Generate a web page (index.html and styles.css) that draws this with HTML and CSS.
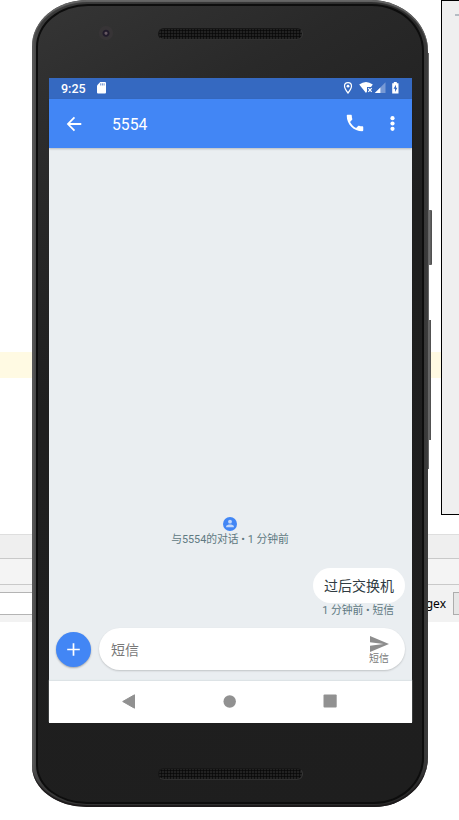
FILE: index.html
```
<!DOCTYPE html>
<html lang="zh-CN">
<head>
<meta charset="utf-8">
<title>5554</title>
<link rel="stylesheet" href="styles.css">
</head>
<body>
<div class="desktop">
  <div class="editor"><div class="current-line"></div></div>
  <div class="tabs"></div>
  <div class="toolbar"></div>
  <div class="filter"><div class="field"></div><span class="regex">Regex</span><div class="combo"></div></div>
</div>
<div class="side-window"><div class="dash"></div></div>
<div class="side-key power"></div>
<div class="side-key volume"></div>
<div class="side-key edge"></div>
<div class="phone">
  <div class="bezel">
    <div class="forehead">
      <div class="camera"></div>
      <div class="speaker"></div>
    </div>
    <div class="screen">
      <div class="status">
        <span class="clock">9:25</span>
        <svg class="sd" width="10" height="12" viewBox="0 0 10 12"><path d="M3.200 0H8Q9 0 9 1V10.600Q9 11.600 8 11.600H1Q0 11.600 0 10.600V3.400Z" fill="#fff"/><path d="M3.700 1.300v2.200M5.400 1.300v2.200M7.100 1.300v2.200" stroke="#3569c1" stroke-width=".7"/></svg>
        <svg class="tray" width="58" height="14" viewBox="0 0 58 14">
          <path d="M5 1.600a3.500 3.500 0 0 0-3.500 3.500C1.500 7.700 5 12 5 12s3.500-4.300 3.500-6.900A3.500 3.500 0 0 0 5 1.600Z" fill="none" stroke="#fff" stroke-width="1.200"/>
          <circle cx="5" cy="5.200" r="1.400" fill="#fff"/>
          <path d="M16.200 3.600Q23 -1.600 29.800 3.600L28 6H24V10.400L23 12Z" fill="#fff"/>
          <path d="M25.300 7.200l3.400 3.600M28.700 7.200l-3.400 3.600" stroke="#fff" stroke-width="1.200"/>
          <path d="M42.500 1.200V12H31.800Z" fill="#7699d5"/>
          <path d="M37.400 6.400V12H31.800Z" fill="#fff"/>
          <path d="M50.800 1h3v1.200H55.500V12.600H49.200V2.200h1.600Z" fill="#fff"/>
          <path d="M53 3.700L50.500 7.800H52V11L54.400 6.800H53Z" fill="#3569c1"/>
        </svg>
      </div>
      <div class="appbar">
        <svg class="back" width="20" height="20" viewBox="1 1 22 22"><path d="M20 11H7.700l5.500-5.500L11.800 4 4 12l7.800 8 1.400-1.500L7.700 13H20Z" fill="#fff"/></svg>
        <span class="title">5554</span>
        <svg class="call" width="22" height="22" viewBox="0 0 24 24"><path d="M6.620 10.790c1.440 2.830 3.760 5.140 6.590 6.590l2.200-2.200c.27-.27.670-.36 1.020-.24 1.120.37 2.330.57 3.570.57.550 0 1 .45 1 1V20c0 .55-.45 1-1 1-9.390 0-17-7.610-17-17 0-.55.450-1 1-1h3.500c.55 0 1 .45 1 1 0 1.250.2 2.450.57 3.570.11.350.03.740-.25 1.020l-2.200 2.200z" fill="#fff"/></svg>
        <svg class="more" width="6" height="18" viewBox="0 0 6 18"><g fill="#fff"><circle cx="2.500" cy="3.200" r="2.100"/><circle cx="2.500" cy="8.500" r="2.100"/><circle cx="2.500" cy="13.800" r="2.100"/></g></svg>
      </div>
      <div class="thread">
        <svg class="avatar" width="15" height="15" viewBox="0 0 15 15"><circle cx="7" cy="8" r="7" fill="#4286f5"/><g fill="#c2d8fb"><circle cx="7" cy="5.700" r="1.900"/><path d="M3.100 11.200V10.400C3.100 9 5.700 8.500 7 8.500s3.900.5 3.900 1.900v.8Z"/></g></svg>
        <div class="intro">与5554的对话 • 1 分钟前</div>
        <div class="bubble">过后交换机</div>
        <div class="meta">1 分钟前 • 短信</div>
        <div class="composer">
          <div class="add"><svg width="13" height="13" viewBox="0 0 13 13"><path d="M6.500 .2V12.800M.2 6.500H12.800" stroke="#fff" stroke-width="1.700"/></svg></div>
          <div class="input">
            <span>短信</span>
            <div class="send"><svg width="19" height="16" viewBox="0 0 19 16"><path d="M0 0L19 8 0 16V9.800L13.500 8 0 6.200Z" fill="#8d8d8d"/></svg><span>短信</span></div>
          </div>
        </div>
      </div>
      <div class="nav">
        <svg width="13" height="15" viewBox="0 0 13 15"><path d="M12.500 .8V14.200L.7 7.500Z" fill="#919191" stroke="#919191" stroke-linejoin="round"/></svg>
        <svg width="13" height="13" viewBox="0 0 13 13"><circle cx="6.700" cy="6.500" r="6.200" fill="#919191"/></svg>
        <svg width="14" height="14" viewBox="0 0 14 14"><rect x=".5" y=".5" width="13.200" height="13" rx="1" fill="#919191"/></svg>
      </div>
    </div>
    <div class="chin"><div class="speaker"></div></div>
  </div>
</div>
</body>
</html>
```
FILE: styles.css
```
* { box-sizing: border-box; }
body {
  margin: 0;
  width: 459px;
  height: 820px;
  overflow: hidden;
  position: relative;
  background: #fff;
  font-family: Roboto, "Noto Sans CJK SC", sans-serif;
}
svg { display: block; flex: none; }

.editor { height: 534px; padding-top: 352px; }
.current-line { height: 26px; background: #fffae3; }
.tabs { height: 25px; background: #efefef; border-top: 1px solid #dedede; border-bottom: 1px solid #c9c9c9; }
.toolbar { height: 26px; background: #f4f4f4; border-bottom: 1px solid #c9c9c9; }
.filter { display: flex; height: 37px; padding-top: 7px; background: #f2f2f2; }
.field { flex: none; width: 400px; height: 23px; background: #fff; border: solid #b4b4b4; border-width: 1px 0; }
.regex { flex: none; width: 53px; padding-right: 7px; text-align: right; font: 12px/23px "Noto Sans", sans-serif; color: #000; }
.combo { flex: none; width: 20px; height: 23px; background: #e6e6e6; border: 1px solid #adadad; }

.side-window {
  position: absolute; left: 441px; top: 0; width: 30px; height: 515px;
  padding: 13px 0 0 13px;
  background: #efefef; border: 1px solid #000;
}
.dash { height: 2px; background: #b5bcc3; }
.side-key { position: absolute; background: linear-gradient(90deg, #444, #777 50%, #484848); }
.power { left: 426px; top: 210px; width: 6px; height: 55px; border-radius: 0 1px 1px 0; }
.volume { left: 426px; top: 320px; width: 5px; height: 120px; }
.edge { left: 426px; top: 53px; width: 3px; height: 416px; background: #666; }

.phone {
  position: absolute; left: 32px; top: 0; width: 396px; height: 807px;
  padding: 4px 4px 3px;
  border-radius: 55px 57px 54px 55px / 46px 51px 50px 41px;
  background: linear-gradient(90deg, #636363, #4a4a4a 3px, #3a3a3a 10px, #2c2c2c 385px, #3d3d3d);
  box-shadow: inset 0 2px 1px #666, inset 0 -2px 1px #1d1a1b;
}
.bezel {
  height: 800px;
  padding: 0 11px;
  border: 2px solid #0d0d0d;
  border-radius: 52px 52px 50px 51px / 43px 47px 46px 39px;
  background: linear-gradient(150deg, #353535, #292929 18%, #1f1f1f 40%, #1e1e1e);
}
.forehead { height: 72px; display: flex; padding: 20px 0 0 50px; }
.camera {
  width: 14px; height: 14px; margin-right: 45px; border-radius: 50%;
  background: radial-gradient(circle at 50% 52%, #665862 0 1px, #211b2b 2px 3px, #373436 4px 7px);
}
.speaker {
  width: 145px; height: 12px; margin-top: 2px; border-radius: 6px;
  background: radial-gradient(circle, #090909 0 .9px, #222 1.300px) 1px 0 / 3px 3px #1a1a1a;
  border: 1px solid #171717; border-right-color: #373737; border-bottom-color: #303030;
}
.screen { width: 363px; height: 645px; display: flex; flex-direction: column; background: #eaeef1; }
.status { height: 21px; display: flex; align-items: center; padding: 0 11px 0 12px; background: #3569c1; color: #fff; }
.clock { font-size: 12.500px; font-weight: 500; width: 36px; line-height: 21px; }
.sd { margin-top: -1px; }
.tray { margin: -1px 0 0 auto; }
.appbar {
  height: 49px; display: flex; align-items: center; padding: 0 16px 0 15px;
  background: #4286f5; color: #fff; box-shadow: 0 1px 2px rgba(0,0,0,.22);
}
.title { margin-left: 28px; font-size: 15.700px; line-height: 20px; padding-top: 2px; }
.call { margin-left: auto; margin-right: 24px; margin-top: -1px; }
.thread { flex: 1; display: flex; flex-direction: column; align-items: center; padding: 368px 7px 0; }
.avatar { margin-right: 1px; }
.intro { font-size: 10.800px; line-height: 15px; padding: 1px 1px 0 0; color: #607982; }
.bubble {
  align-self: flex-end; height: 35px; margin-top: 21px; padding: 0 11px;
  border-radius: 18px; background: #fff; color: #303b42; font-size: 14px; line-height: 36px;
}
.meta { align-self: flex-end; margin: 0 11px 0 0; font-size: 10.800px; line-height: 16px; color: #607982; }
.composer { align-self: stretch; display: flex; align-items: center; gap: 8px; margin-top: 9px; }
.add {
  width: 35px; height: 35px; border-radius: 50%; background: #4286f5;
  display: grid; place-items: center; box-shadow: 0 1px 2px rgba(0,0,0,.3);
}
.input {
  flex: 1; height: 42px; display: flex; align-items: center; justify-content: space-between;
  padding: 0 16px 0 12px; border-radius: 21px; background: #fff; color: #787878;
  font-size: 14px; box-shadow: 0 1px 2px rgba(0,0,0,.18);
}
.send { display: flex; flex-direction: column; align-items: center; padding-top: 3px; }
.send span { font-size: 10px; line-height: 14px; }
.nav { height: 42px; display: flex; align-items: center; justify-content: space-between; padding: 0 75px 2px 73px; background: #fff; box-shadow: 0 -1px 1px #dde3e6; }
.chin { display: flex; padding: 43px 0 0 109px; }
```
